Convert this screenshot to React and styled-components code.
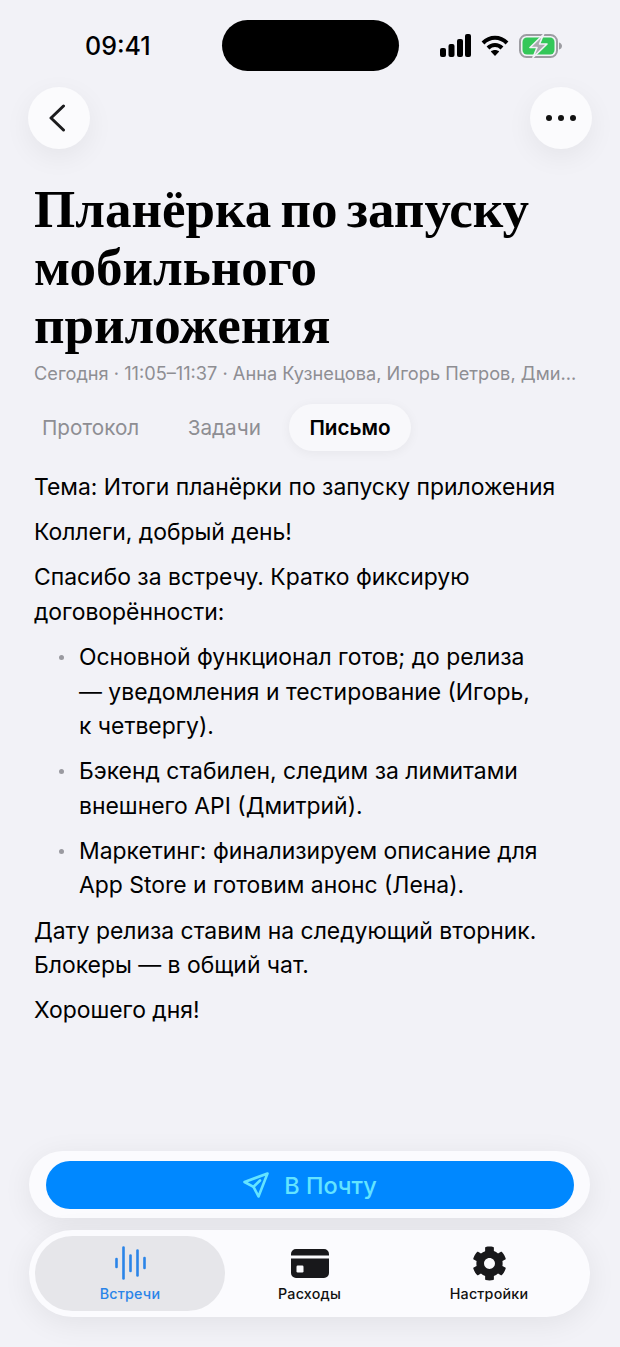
import React from 'react';
import styled, { createGlobalStyle } from 'styled-components';
import { FaCog } from 'react-icons/fa';

const GlobalStyle = createGlobalStyle`
    html, body {
        margin: 0;
        padding: 0;
        background: #f2f2f7;
    }
    * {
        box-sizing: border-box;
    }
`;

const Page = styled.div`
    width: 620px;
    height: 1347px;
    display: flex;
    flex-direction: column;
    overflow: hidden;
    background: #f2f2f7;
    color: #000;
    font-family: Inter, "Liberation Sans", sans-serif;
`;

const StatusBar = styled.div`
    display: flex;
    align-items: center;
    height: 51px;
    margin-top: 20px;
    padding: 0 58px 0 85px;
`;

const Clock = styled.div`
    width: 66px;
    padding-top: 1px;
    font-size: 25px;
    font-weight: 500;
    line-height: 51px;
`;

const Island = styled.div`
    width: 177px;
    height: 51px;
    margin-left: 71px;
    border-radius: 26px;
    background: #000;
`;

const StatusIcons = styled.div`
    display: flex;
    align-items: center;
    gap: 10px;
    margin-left: auto;
`;

const NavRow = styled.div`
    display: flex;
    justify-content: space-between;
    padding: 16px 28px 0;
`;

const RoundButton = styled.button`
    width: 62px;
    height: 62px;
    padding: 0;
    border: none;
    border-radius: 50%;
    display: flex;
    align-items: center;
    justify-content: center;
    background: #fbfbfd;
    box-shadow: 0 8px 28px rgba(0, 0, 0, 0.06);
`;

const Content = styled.div`
    padding: 0 34px;
`;

const Title = styled.h1`
    margin: 31px 0 0;
    font-family: "Liberation Serif", serif;
    font-size: 53px;
    font-weight: 700;
    line-height: 58px;
    word-spacing: -4px;
`;

const Meta = styled.div`
    margin-top: 7px;
    font-size: 18.2px;
    line-height: 24px;
    color: #8e8e93;
    white-space: nowrap;
`;

const Tabs = styled.div`
    display: flex;
    align-items: center;
    gap: 8.5px;
    margin: 19px 0 0 -12px;
`;

const Tab = styled.div`
    height: 47px;
    padding: 0 20px;
    display: flex;
    align-items: center;
    border-radius: 24px;
    font-size: 20.7px;
    font-weight: ${(p) => (p.$active ? 600 : 400)};
    color: ${(p) => (p.$active ? '#000' : '#8e8e93')};
    background: ${(p) => (p.$active ? '#f8f8fb' : 'transparent')};
    box-shadow: ${(p) => (p.$active ? '0 2px 12px rgba(0, 0, 0, 0.05)' : 'none')};
`;

const Letter = styled.div`
    margin-top: 19px;
    font-size: 22.9px;
    line-height: 34.5px;
`;

const Para = styled.p`
    margin: 0 0 10.7px;
`;

const Bullets = styled.ul`
    margin: 0 0 10.7px;
    padding: 0 0 0 45px;
    list-style: none;
`;

const Bullet = styled.li`
    position: relative;
    margin-bottom: 10.7px;

    &::before {
        content: '';
        position: absolute;
        left: -20px;
        top: 15px;
        width: 5px;
        height: 5px;
        border-radius: 50%;
        background: #9a9aa0;
    }
`;

const Bottom = styled.div`
    margin-top: auto;
    padding: 0 30px 30px 29px;
    display: flex;
    flex-direction: column;
    gap: 12px;
`;

const ActionCard = styled.div`
    height: 67px;
    padding: 10px 16px 10px 17px;
    border-radius: 34px;
    background: #fbfbfe;
    box-shadow: 0 6px 30px rgba(0, 0, 0, 0.07);
`;

const ActionButton = styled.button`
    width: 100%;
    height: 48px;
    border: none;
    border-radius: 24px;
    display: flex;
    align-items: center;
    justify-content: center;
    gap: 15px;
    background: #0088ff;
    color: #64e4ff;
    font-family: inherit;
    font-size: 23.5px;
    font-weight: 500;
`;

const TabBar = styled.nav`
    height: 87px;
    padding: 6px;
    display: grid;
    grid-template-columns: 190px 1fr 190px;
    border-radius: 44px;
    background: #fbfbfe;
    box-shadow: 0 6px 30px rgba(0, 0, 0, 0.07);
`;

const BarItem = styled.div`
    display: flex;
    flex-direction: column;
    align-items: center;
    padding-top: 10px;
    border-radius: 38px;
    background: ${(p) => (p.$active ? '#e6e6ea' : 'transparent')};
    color: ${(p) => (p.$active ? '#2a84e8' : '#111')};
`;

const BarIcon = styled.div`
    height: 34px;
    display: flex;
    align-items: center;
    justify-content: center;
`;

const BarLabel = styled.div`
    margin-top: 5px;
    font-size: 14.3px;
    font-weight: 500;
    line-height: 18px;
    letter-spacing: 0.2px;
`;

const Signal = () => (
    <svg width="31" height="23" viewBox="0 0 31 23" fill="#000">
        <rect x="0" y="14" width="6" height="9" rx="2" />
        <rect x="8.5" y="10" width="6" height="13" rx="2" />
        <rect x="17" y="5" width="6" height="18" rx="2" />
        <rect x="25" y="0" width="6" height="23" rx="2" />
    </svg>
);

const Wifi = () => (
    <svg width="28" height="21" viewBox="0 0 28 21" fill="none" stroke="#000" strokeWidth="4">
        <path d="M2 8 C9 1 19 1 26 8" />
        <path d="M7 13 C11 9 17 9 21 13" />
        <path d="M14 21 L9.8 16.6 C12 14.6 16 14.6 18.2 16.6 Z" fill="#000" stroke="none" />
    </svg>
);

const Battery = () => (
    <svg width="43" height="24" viewBox="0 0 43 24">
        <rect x="1" y="1" width="37" height="22" rx="6.5" fill="none" stroke="#9d9da2" strokeWidth="2" />
        <rect x="3.5" y="3.5" width="32" height="17" rx="4.5" fill="#34c759" />
        <path d="M40 8.5 C42 9 43 10.5 43 12 C43 13.5 42 15 40 15.5 Z" fill="#9d9da2" />
        <path d="M24.5 0.5 L11 13.5 H18 L14 23.5 L28 10 H20.5 Z" fill="#a9a9ae" stroke="#f2f2f7" strokeWidth="1.6" strokeLinejoin="round" />
    </svg>
);

const Chevron = () => (
    <svg width="18" height="28" viewBox="0 0 18 28" fill="none" stroke="#1c1c1e" strokeWidth="3" strokeLinecap="round" strokeLinejoin="round" style={{ marginRight: 4 }}>
        <path d="M15.5 2 L3 14 L15.5 26" />
    </svg>
);

const Dots = () => (
    <svg width="30" height="6" viewBox="0 0 30 6" fill="#111">
        <circle cx="3" cy="3" r="3" />
        <circle cx="15" cy="3" r="3" />
        <circle cx="27" cy="3" r="3" />
    </svg>
);

const Plane = () => (
    <svg width="26" height="26" viewBox="0 0 26 26" fill="none" stroke="#64e4ff" strokeWidth="2.6" strokeLinejoin="round" strokeLinecap="round">
        <path d="M24.5 1.5 L1.5 10 L10.5 14.8 L15.5 24.5 Z" />
        <path d="M10.5 14.8 L17 8.5" />
    </svg>
);

const Wave = () => (
    <svg width="31" height="34" viewBox="0 0 31 34" fill="none" stroke="#2a84e8" strokeWidth="2.6" strokeLinecap="round">
        <path d="M1.5 13 V21" />
        <path d="M8.5 1.5 V32.5" />
        <path d="M15.5 9.5 V25" />
        <path d="M22.5 4.5 V29.5" />
        <path d="M29.5 12 V22" />
    </svg>
);

const Card = () => (
    <svg width="38" height="29" viewBox="0 0 38 29">
        <path d="M0 5 A5 5 0 0 1 5 0 H33 A5 5 0 0 1 38 5 V6.5 H0 Z M0 9.5 H38 V24 A5 5 0 0 1 33 29 H5 A5 5 0 0 1 0 24 Z" fill="#18181b" />
        <rect x="5.5" y="16.5" width="7" height="7" rx="1.2" fill="#fbfbfe" />
    </svg>
);

const bullets = [
    <>Основной функционал готов; до релиза<br />— уведомления и тестирование (Игорь,<br />к четвергу).</>,
    <>Бэкенд стабилен, следим за лимитами<br />внешнего API (Дмитрий).</>,
    <>Маркетинг: финализируем описание для<br />App Store и готовим анонс (Лена).</>,
];

const App = () => (
    <Page>
        <GlobalStyle />
        <StatusBar>
            <Clock>09:41</Clock>
            <Island />
            <StatusIcons>
                <Signal />
                <Wifi />
                <Battery />
            </StatusIcons>
        </StatusBar>
        <NavRow>
            <RoundButton><Chevron /></RoundButton>
            <RoundButton><Dots /></RoundButton>
        </NavRow>
        <Content>
            <Title>Планёрка по запуску мобильного приложения</Title>
            <Meta>Сегодня · 11:05–11:37 · Анна Кузнецова, Игорь Петров, Дми...</Meta>
            <Tabs>
                <Tab>Протокол</Tab>
                <Tab>Задачи</Tab>
                <Tab $active>Письмо</Tab>
            </Tabs>
            <Letter>
                <Para>Тема: Итоги планёрки по запуску приложения</Para>
                <Para>Коллеги, добрый день!</Para>
                <Para>Спасибо за встречу. Кратко фиксирую<br />договорённости:</Para>
                <Bullets>
                    {bullets.map((text, i) => <Bullet key={i}>{text}</Bullet>)}
                </Bullets>
                <Para>Дату релиза ставим на следующий вторник.<br />Блокеры — в общий чат.</Para>
                <Para>Хорошего дня!</Para>
            </Letter>
        </Content>
        <Bottom>
            <ActionCard>
                <ActionButton><Plane />В Почту</ActionButton>
            </ActionCard>
            <TabBar>
                <BarItem $active>
                    <BarIcon><Wave /></BarIcon>
                    <BarLabel>Встречи</BarLabel>
                </BarItem>
                <BarItem>
                    <BarIcon><Card /></BarIcon>
                    <BarLabel>Расходы</BarLabel>
                </BarItem>
                <BarItem>
                    <BarIcon><FaCog size={35} color="#18181b" /></BarIcon>
                    <BarLabel>Настройки</BarLabel>
                </BarItem>
            </TabBar>
        </Bottom>
    </Page>
);

export default App;
